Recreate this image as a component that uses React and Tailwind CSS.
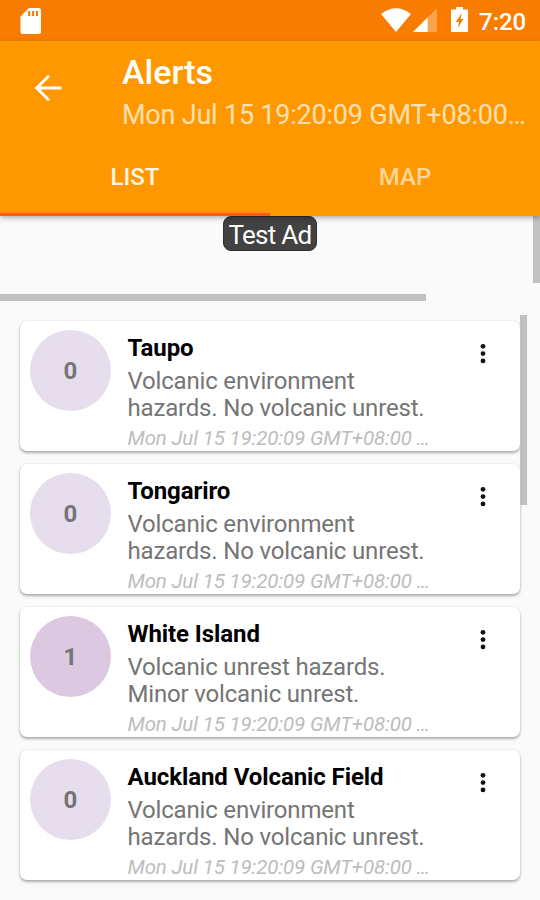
import React from "react";

const STAMP = "Mon Jul 15 19:20:09 GMT+08:00";

const alerts = [
  { level: 0, name: "Taupo", lines: ["Volcanic environment", "hazards. No volcanic unrest."] },
  { level: 0, name: "Tongariro", lines: ["Volcanic environment", "hazards. No volcanic unrest."] },
  { level: 1, name: "White Island", lines: ["Volcanic unrest hazards.", "Minor volcanic unrest."] },
  { level: 0, name: "Auckland Volcanic Field", lines: ["Volcanic environment", "hazards. No volcanic unrest."] },
];

function StatusBar() {
  return (
    <div className="flex h-[41px] shrink-0 items-start bg-[#f77c00] text-white">
      <svg className="mt-[8px] ml-[20px] h-[26px] w-[22px]" viewBox="0 0 22 26" fill="none">
        <path d="M9 0H18.5Q21 0 21 2.5V23.5Q21 26 18.5 26H3Q.5 26 .5 23.5V8.5Z" fill="#fff" />
        <path d="M9.2 3v5M13.1 3v5M17 3v5" stroke="#f77c00" strokeWidth="2.1" />
      </svg>
      <svg className="mt-[8px] ml-[339px] h-[24px] w-[30px]" viewBox="0 0 30 24">
        <path d="M0 6Q15-5.5 30 6L15 24Z" fill="#fff" />
      </svg>
      <svg className="mt-[8px] ml-[2px] h-[24px] w-[24px]" viewBox="0 0 24 24">
        <path d="M24 0V24H0Z" fill="#fff" fillOpacity=".3" />
        <path d="M14.6 9.4V24H0Z" fill="#fff" />
      </svg>
      <svg className="mt-[7px] ml-[14px] h-[25px] w-[17px]" viewBox="0 0 17 25">
        <path d="M5 0H12V2.5H17V25H0V2.5H5Z" fill="#fff" />
        <path d="M10.8 6L9.6 12H12.4L6.8 21L8 15H4.8Z" fill="#f77c00" />
      </svg>
      <span className="mt-[8px] ml-[11px] text-[24px] leading-[29px] font-medium whitespace-nowrap">7:20</span>
    </div>
  );
}

function AppBar() {
  return (
    <header className="relative z-10 flex h-[175px] shrink-0 flex-col bg-[#ff9800] shadow-[0_2px_5px_rgba(0,0,0,0.3)]">
      <div className="flex h-[96px] pl-[34px] text-white">
        <svg className="mt-[33px] h-[28px] w-[28px] shrink-0" viewBox="0 0 28 28" fill="none" stroke="#fff" strokeWidth="2.8">
          <path d="M27.5 14H3M15 1.7L2.7 14L15 26.3" />
        </svg>
        <div className="ml-[60px] whitespace-nowrap">
          <h1 className="mt-[11px] text-[34px] leading-[40px] font-medium">Alerts</h1>
          <p className="mt-[7px] text-[27px] leading-[32px] tracking-[-0.21px] text-[#ffe0b2]">{STAMP}…</p>
        </div>
      </div>
      <nav className="grid h-[79px] grid-cols-2 text-center text-[24px] leading-[80px] font-medium">
        <div className="h-[79px] border-b-[3px] border-[#ff5722] text-[#fff5e6]">LIST</div>
        <div className="h-[79px] text-[#ffd699]">MAP</div>
      </nav>
    </header>
  );
}

function AdBanner() {
  return (
    <div className="relative h-[85px] shrink-0">
      <div className="mx-auto h-[35px] w-[94px] rounded-[8px] border border-[#2c3030] bg-[#424242] text-center text-[26px] leading-[36px] tracking-[-0.7px] whitespace-nowrap text-white">
        Test Ad
      </div>
      <div className="absolute top-0 right-0 h-[67px] w-[7px] bg-[#c1c1c1]" />
      <div className="absolute bottom-0 left-0 h-[7px] w-[426px] bg-[#c1c1c1]" />
    </div>
  );
}

function AlertCard({ alert }) {
  return (
    <article className="flex h-[130px] shrink-0 rounded-[7px] bg-white pl-[10px] whitespace-nowrap shadow-[0_2px_3px_rgba(0,0,0,0.3),0_0_2px_rgba(0,0,0,0.12)]">
      <div
        className={`mt-[9px] h-[81px] w-[81px] shrink-0 rounded-full text-center text-[24px] leading-[83px] font-bold text-[#757575] ${
          alert.level === 1 ? "bg-[#dcc8e0]" : "bg-[#e6deec]"
        }`}
      >
        {alert.level}
      </div>
      <div className="ml-[16.5px] w-[330px]">
        <h2 className="mt-[13px] text-[24px] leading-[28px] font-bold tracking-[-0.08px] text-black">{alert.name}</h2>
        <div className="mt-[6px] text-[24px] leading-[27px] tracking-[-0.18px] text-[#757575]">
          {alert.lines.map((line) => (
            <p key={line}>{line}</p>
          ))}
        </div>
        <p className="mt-[4px] text-[20.5px] leading-[24px] tracking-[-0.17px] text-[#bdbdbd] italic">{STAMP} …</p>
      </div>
      <svg className="mt-[22px] ml-[21px] h-[22px] w-[8px] shrink-0" viewBox="0 0 8 22" fill="#111">
        <circle cx="4" cy="3.3" r="2.4" />
        <circle cx="4" cy="10.6" r="2.4" />
        <circle cx="4" cy="17.9" r="2.4" />
      </svg>
    </article>
  );
}

export default function App() {
  return (
    <div className="flex h-[900px] w-[540px] flex-col overflow-hidden bg-[#fafafa] font-['Roboto',sans-serif]">
      <StatusBar />
      <AppBar />
      <AdBanner />
      <main className="relative flex flex-col gap-[13px] px-[20px] pt-[20px]">
        {alerts.map((alert) => (
          <AlertCard key={alert.name} alert={alert} />
        ))}
        <div className="absolute top-[14px] right-[13px] h-[190px] w-[7px] bg-[#c1c1c1]" />
      </main>
    </div>
  );
}
